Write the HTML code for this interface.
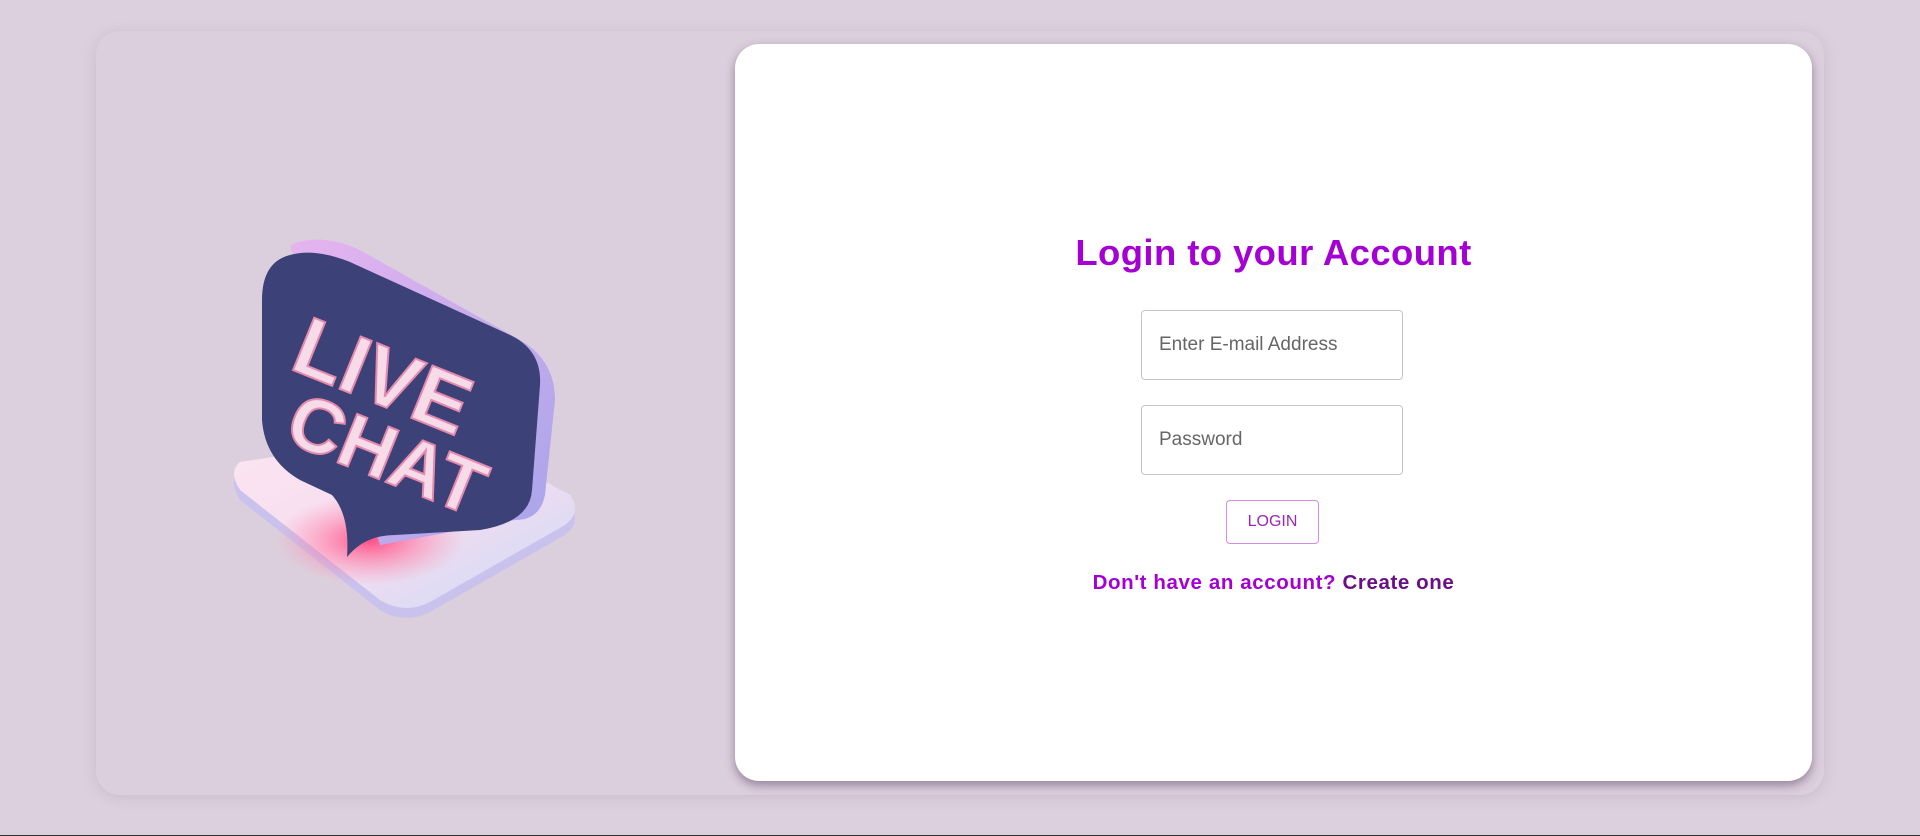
<!DOCTYPE html>
<html><head><style>
html,body{margin:0;padding:0}
body{width:1920px;height:836px;background:#dcd0de;position:relative;overflow:hidden;font-family:"Liberation Sans",sans-serif}
.outer{position:absolute;left:96px;top:31px;width:1728px;height:764px;border-radius:24px;background:#dccfdd;box-shadow:0 2px 14px rgba(120,90,130,.18)}
.card{position:absolute;left:735px;top:44px;width:1077px;height:737px;background:#fff;border-radius:24px;box-shadow:0 4px 10px rgba(60,30,70,.45)}
h1{position:absolute;left:735px;width:1077px;top:232px;margin:0;text-align:center;font-size:36.5px;letter-spacing:0.4px;font-weight:bold;color:#a400d6}
.inp{position:absolute;left:1141px;width:260px;height:68px;border:1px solid #c4c4c4;border-radius:4px;font-size:19px;color:#666;line-height:68px;text-indent:17px;box-sizing:content-box}
.btn{position:absolute;left:1226px;top:500px;width:91px;height:42px;border:1px solid #d58be3;border-radius:4px;color:#9c27b0;font-size:16px;line-height:42px;text-align:center}
.link{position:absolute;left:735px;width:1077px;top:571px;text-align:center;font-size:20.5px;letter-spacing:0.6px;font-weight:bold;color:#a400d6}
.link b{color:#6a0f86}
.bottom{position:absolute;left:0;top:835px;width:1920px;height:1px;background:#333}
</style></head><body>
<div class="outer"></div>
<svg style="position:absolute;left:0;top:0" width="760" height="836">
<defs>
<linearGradient id="pl" x1="0" y1="0" x2="1" y2="1"><stop offset="0" stop-color="#fbe6f2"/><stop offset=".5" stop-color="#f7dcef"/><stop offset="1" stop-color="#c8dcf7"/></linearGradient>
<radialGradient id="glow" cx=".5" cy=".5" r=".5"><stop offset="0" stop-color="#ff4f86"/><stop offset="1" stop-color="#ff8fb0" stop-opacity="0"/></radialGradient>
<linearGradient id="side" x1="0" y1="0" x2="1" y2="1"><stop offset="0" stop-color="#e6b4ef"/><stop offset="1" stop-color="#a8a4ea"/></linearGradient>
</defs>
<path d="M240 470 Q228 480 240 500 L380 610 Q405 625 430 612 L565 535 Q582 522 570 505 L450 440 Z" fill="#c9c2ec"/>
<path d="M240 462 Q228 472 240 490 L380 600 Q405 615 430 602 L565 525 Q582 512 570 495 L450 430 Z" fill="url(#pl)"/>
<ellipse cx="370" cy="540" rx="95" ry="45" fill="url(#glow)"/>
<path d="M290 245 Q320 232 360 250 L520 340 Q555 360 555 400 L545 495 Q540 520 515 520 L380 545 Z" fill="url(#side)"/>
<path d="M290 255 Q262 262 262 300 L262 420 Q265 460 300 480 L332 495 Q350 515 347 557 Q365 535 395 535 L480 530 Q530 522 532 490 L540 385 Q542 350 510 335 L350 262 Q315 248 290 255 Z" fill="#3c4177"/>
<g font-family="Liberation Sans,sans-serif" font-weight="bold" fill="#f8dbe8" stroke="#e58aae" stroke-width="2">
<text x="288" y="368" font-size="82" transform="rotate(22 288 368)">LIVE</text>
<text x="282" y="440" font-size="76" transform="rotate(22 282 440)">CHAT</text>
</g>
</svg>
<div class="card"></div>
<h1>Login to your Account</h1>
<div class="inp" style="top:310px">Enter E-mail Address</div>
<div class="inp" style="top:405px">Password</div>
<div class="btn">LOGIN</div>
<div class="link">Don't have an account? <b>Create one</b></div>
<div class="bottom"></div>
</body></html>
